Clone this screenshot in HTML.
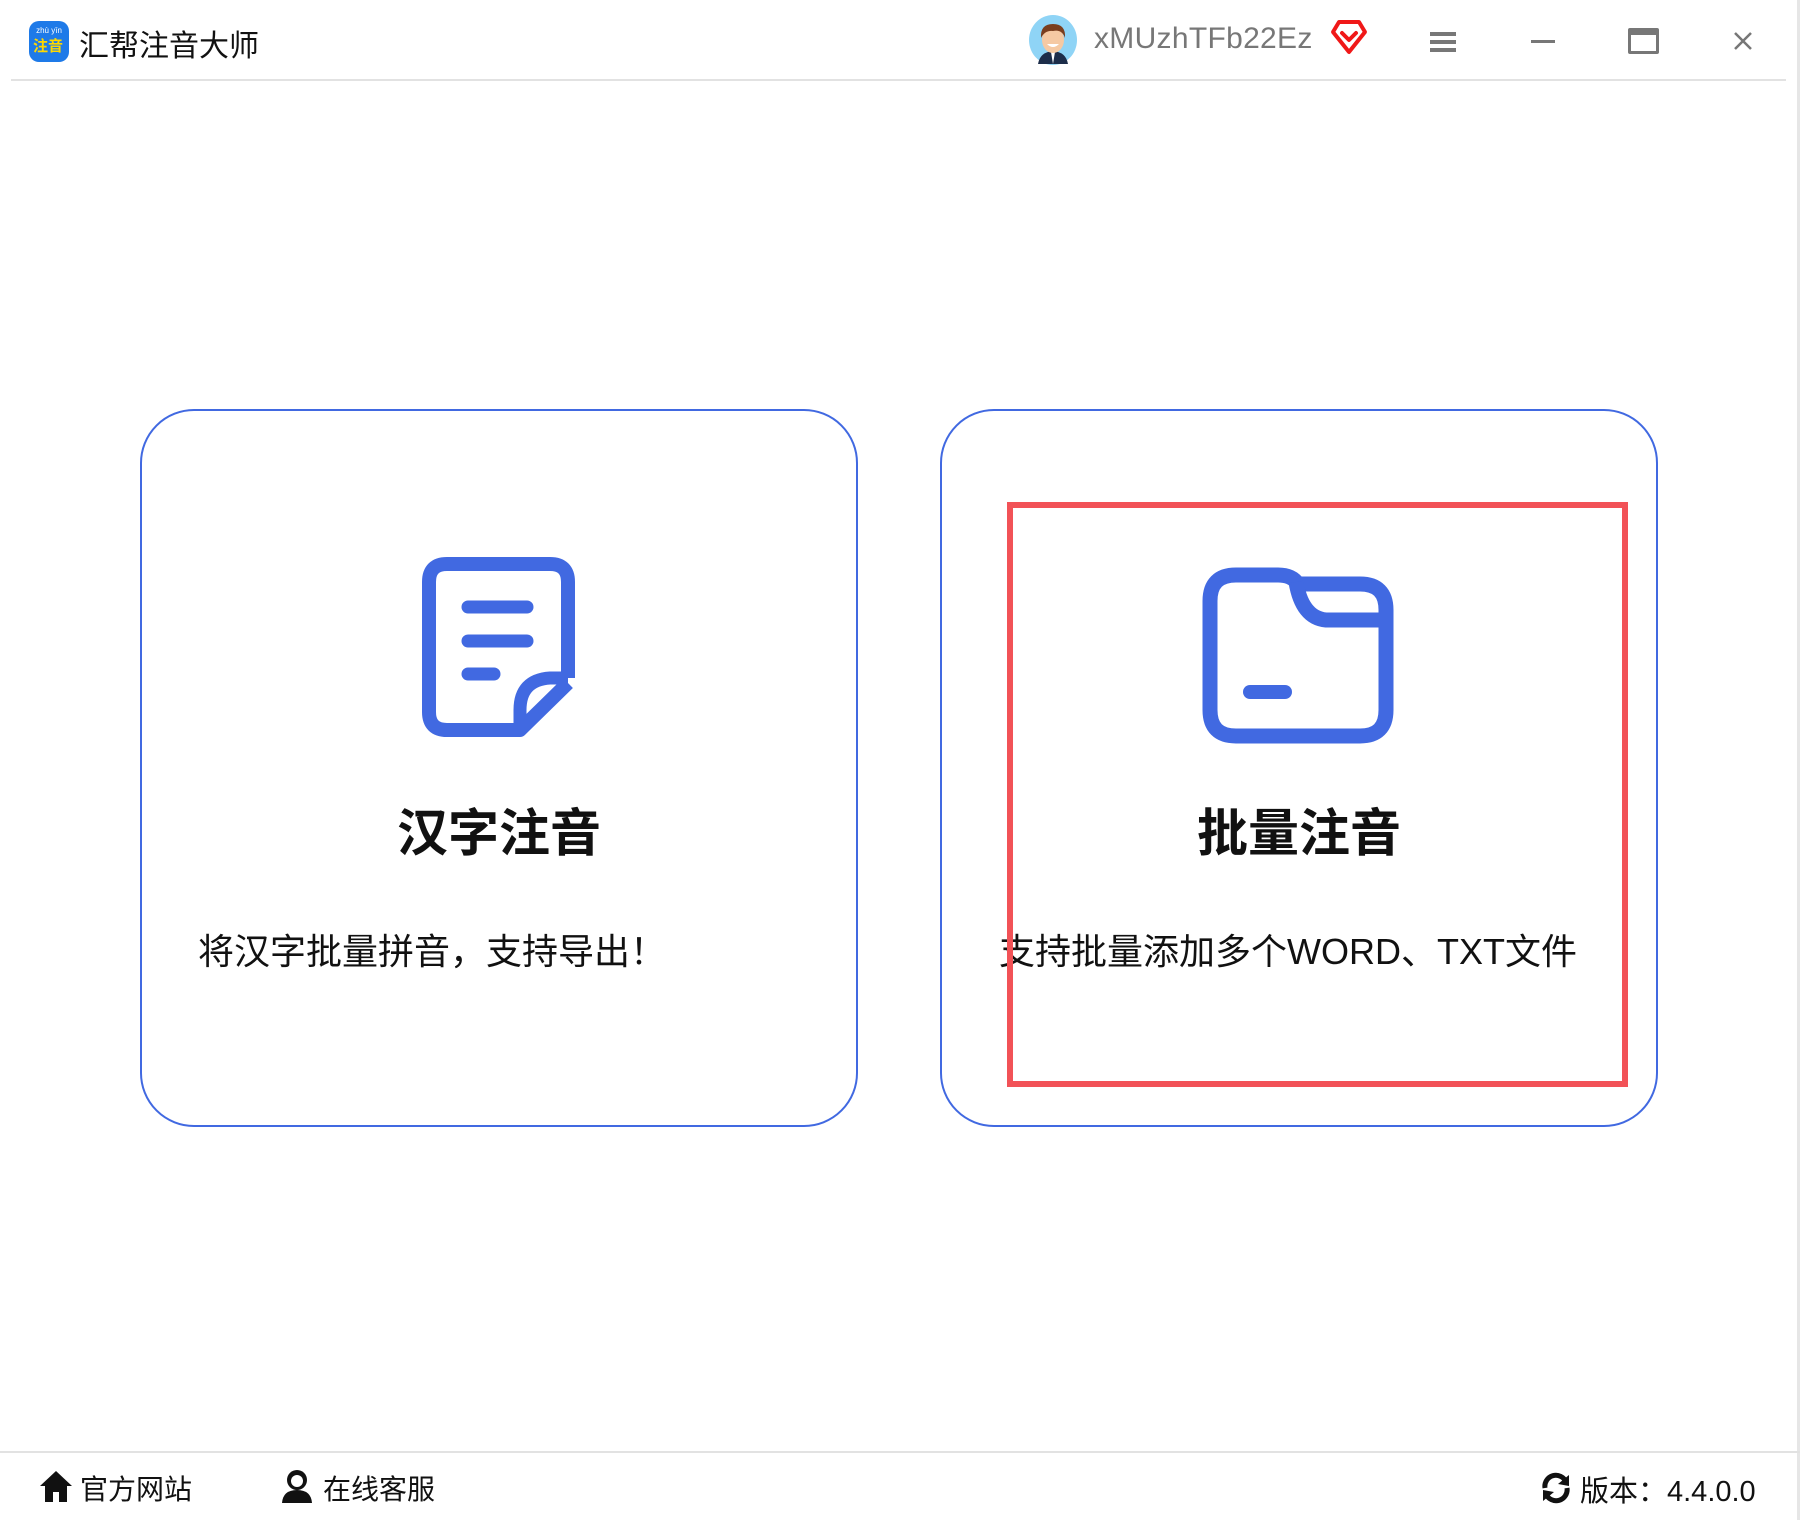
<!DOCTYPE html>
<html><head><meta charset="utf-8"><style>
*{margin:0;padding:0;box-sizing:border-box}
body{width:1800px;height:1520px;background:#fff;position:relative;overflow:hidden;font-family:"Liberation Sans","Noto Sans CJK SC",sans-serif}
.a{position:absolute}
.card{position:absolute;top:409px;width:718px;height:718px;border:2px solid #4169e1;border-radius:54px}
.t{position:absolute;white-space:nowrap}
</style></head><body>
<div class="a" style="left:11px;top:79px;width:1775px;height:2px;background:#e2e2e2"></div>
<div class="a" style="left:1797px;top:0;width:3px;height:1520px;background:#e6e6e6"></div>
<div class="a" style="left:0;top:1451px;width:1800px;height:2px;background:#e2e2e2"></div>
<!-- logo -->
<div class="a" style="left:29px;top:21px;width:40px;height:41px;border-radius:10px;background:#1e7ae8"></div>
<div class="t" style="left:31px;top:26px;font-size:8px;color:#fff;width:36px;text-align:center">zhù yīn</div>
<div class="t" style="left:33px;top:35px;font-size:15px;font-weight:bold;color:#ffd800">注音</div>
<div class="t" style="left:79px;top:21px;font-size:30px;color:#111">汇帮注音大师</div>
<!-- avatar -->
<svg class="a" style="left:1028px;top:14px" width="50" height="52" viewBox="0 0 50 52">
<ellipse cx="25" cy="26" rx="24" ry="25" fill="#8fd4f6"/>
<path d="M10 50 Q12 38 25 37 Q38 38 40 50 Z" fill="#1d2d4a"/>
<path d="M23 38 L25 50 L27 38Z" fill="#fff"/>
<ellipse cx="25" cy="26" rx="11" ry="13" fill="#f5c9a3"/>
<path d="M13 24 Q12 10 25 10 Q38 10 37 24 Q34 15 25 17 Q17 16 13 24Z" fill="#7a3e1e"/>
<path d="M19 30 Q25 36 31 30Z" fill="#fff"/>
</svg>
<div class="t" style="left:1094px;top:22px;font-size:30px;color:#777;letter-spacing:0.3px">xMUzhTFb22Ez</div>
<svg class="a" style="left:1330px;top:18px" width="38" height="38" viewBox="0 0 38 38">
<path d="M9 4 L29 4 L35 14 L19 34 L3 14 Z" fill="none" stroke="#f01818" stroke-width="4" stroke-linejoin="round"/>
<path d="M12 15 L19 22 L26 15" fill="none" stroke="#f01818" stroke-width="4" stroke-linecap="round" stroke-linejoin="round"/>
</svg>
<svg class="a" style="left:1430px;top:30px" width="26" height="22"><rect x="0" y="2" width="26" height="4" fill="#777"/><rect x="0" y="10" width="26" height="4" fill="#777"/><rect x="0" y="18" width="26" height="4" fill="#777"/></svg>
<div class="a" style="left:1531px;top:40px;width:24px;height:3px;background:#777"></div>
<div class="a" style="left:1628px;top:28px;width:31px;height:26px;border:3px solid #777;border-top-width:7px;border-radius:2px"></div>
<svg class="a" style="left:1733px;top:31px" width="20" height="20"><path d="M2 2 L18 18 M18 2 L2 18" stroke="#777" stroke-width="2.5"/></svg>
<!-- cards -->
<div class="card" style="left:140px"></div>
<div class="card" style="left:940px"></div>
<svg class="a" style="left:420px;top:555px" width="165" height="190" viewBox="0 0 165 190">
<path d="M148 123 L148 27 Q148 9 130 9 L27 9 Q9 9 9 27 L9 157 Q9 175 27 175 L100 175 L148 128" fill="none" stroke="#4169e1" stroke-width="14" stroke-linejoin="round"/>
<path d="M148 123 L130 123 Q100 125 100 155 L100 175" fill="none" stroke="#4169e1" stroke-width="13" stroke-linejoin="round"/>
<path d="M48 52 L107 52 M48 86 L107 86 M48 119 L74 119" stroke="#4169e1" stroke-width="13" stroke-linecap="round"/>
</svg>
<svg class="a" style="left:1200px;top:565px" width="200" height="185" viewBox="0 0 200 185">
<path d="M36 10 L78 10 Q92 10 98 19 L160 19 Q186 19 186 45 L186 145 Q186 171 160 171 L36 171 Q10 171 10 145 L10 36 Q10 10 36 10Z" fill="none" stroke="#4169e1" stroke-width="15" stroke-linejoin="round"/>
<path d="M96 17 Q102 53 126 55 L186 55" fill="none" stroke="#4169e1" stroke-width="15" stroke-linejoin="round"/>
<path d="M50 127 L85 127" stroke="#4169e1" stroke-width="14" stroke-linecap="round"/>
</svg>
<div class="t" style="left:140px;width:718px;text-align:center;top:792px;font-size:51px;font-weight:bold;color:#111">汉字注音</div>
<div class="t" style="left:940px;width:718px;text-align:center;top:792px;font-size:51px;font-weight:bold;color:#111">批量注音</div>
<div class="t" style="left:198px;top:923px;font-size:36px;color:#111">将汉字批量拼音，支持导出！</div>
<div class="t" style="left:999px;top:923px;font-size:36px;color:#111">支持批量添加多个WORD、TXT文件</div>
<div class="a" style="left:1007px;top:502px;width:621px;height:585px;border:6px solid #f25257"></div>
<!-- footer -->
<svg class="a" style="left:38px;top:1469px" width="36" height="34" viewBox="0 0 36 34"><path d="M18 2 L34 17 L29 17 L29 33 L21 33 L21 23 L15 23 L15 33 L7 33 L7 17 L2 17 Z" fill="#111"/></svg>
<div class="t" style="left:80px;top:1468px;font-size:28px;color:#111">官方网站</div>
<svg class="a" style="left:280px;top:1469px" width="34" height="34" viewBox="0 0 34 34"><circle cx="17" cy="11" r="10" fill="#111"/><circle cx="17" cy="12" r="6" fill="#fff"/><path d="M2 34 Q3 21 17 21 Q31 21 32 34Z" fill="#111"/></svg>
<div class="t" style="left:323px;top:1468px;font-size:28px;color:#111">在线客服</div>
<svg class="a" style="left:1540px;top:1472px" width="32" height="32" viewBox="0 0 32 32"><path d="M5 16 A11 11 0 0 1 26 10" fill="none" stroke="#111" stroke-width="5"/><path d="M29 3 L29 14 L18 12Z" fill="#111"/><path d="M27 16 A11 11 0 0 1 6 22" fill="none" stroke="#111" stroke-width="5"/><path d="M3 29 L3 18 L14 20Z" fill="#111"/></svg>
<div class="t" style="left:1580px;top:1468px;font-size:29px;color:#111">版本：4.4.0.0</div>
</body></html>
